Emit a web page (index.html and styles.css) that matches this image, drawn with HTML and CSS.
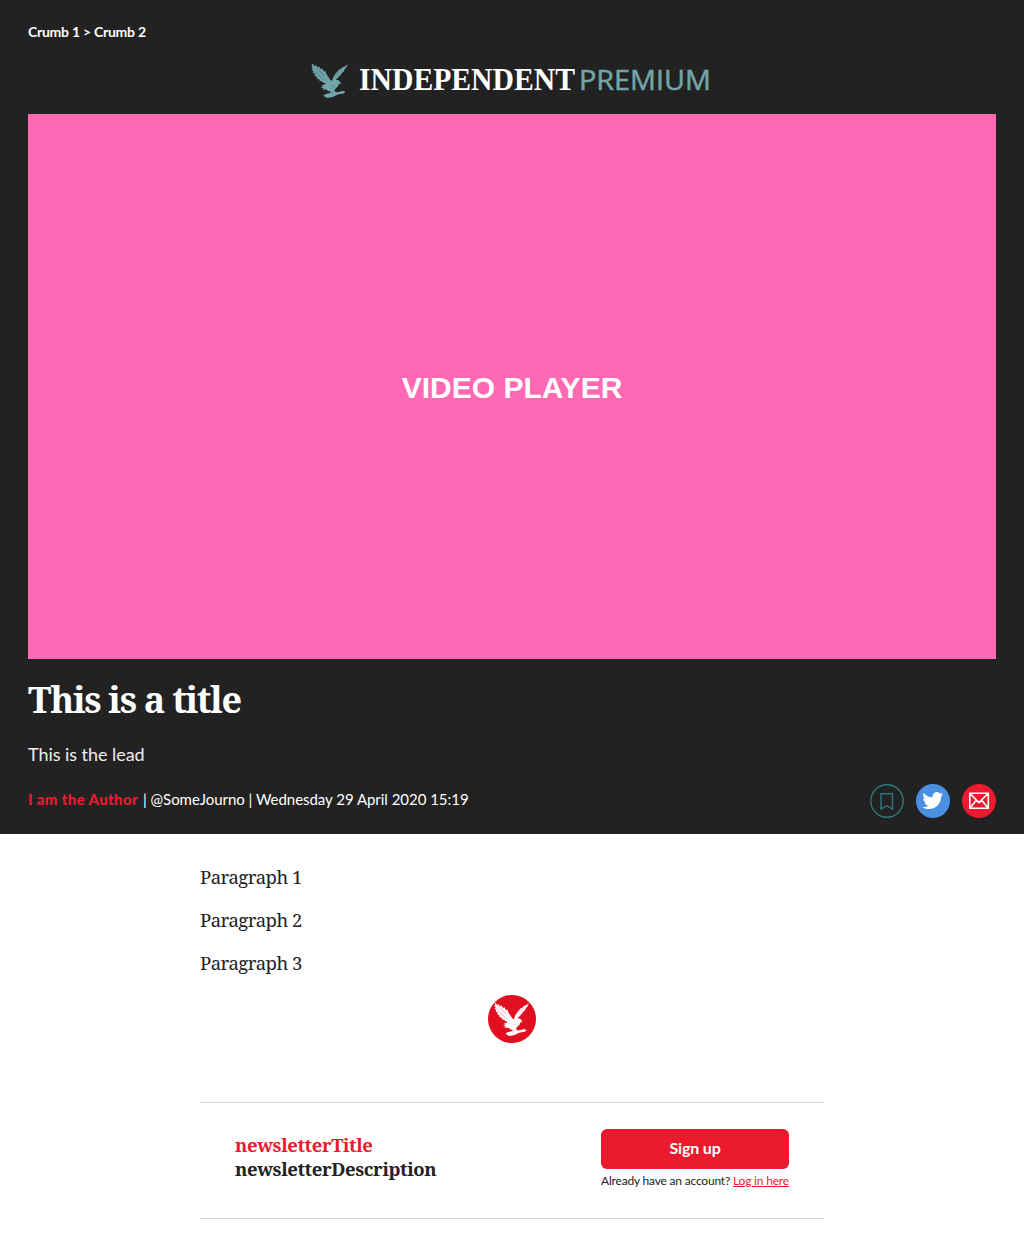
FILE: index.html
```html
<!DOCTYPE html>
<html lang="en">
<head>
<meta charset="utf-8">
<title>This is a title</title>
<link rel="stylesheet" href="styles.css">
</head>
<body>
<svg class="defs" width="0" height="0" aria-hidden="true">
  <symbol id="eagle" viewBox="12 13 105 100" preserveAspectRatio="none">
    <path d="M20 12l5 9 2-6 6 9 2-5 7 10 3-4 6 11 3-3 4 11 5 7 5 8 4 4 5-12 5-9 6-7 4-5 5-2 4-5 7-3 9-6-5 10-4 4-2 6-5 5-4 6-7 8-7 6 8 2 5 5 1 6-5-1-2 7-7 7-4 6 5 5 9-1 9-3 8 3-5 5-17 3-11 6-15 4-9-3-4-5 7-4 9-2 6-5-7-1-8-5-10 1 4-5-9-1 7-4-5-3 9-3 3-4-9-1 1-3-9-3 1-3-9-4 2-3-8-6 3-2-8-7 3-1-6-8 4 0-5-9 4 1-3-9 4 2z"/>
    <path class="feather" d="M19 25l19 19M27 23l21 22M36 28l18 22M24 37l22 17M34 47l20 14M82 47l21-20M86 53l17-16M72 76l6 8M68 99l11-3"/>
  </symbol>
</svg>
<header class="hero">
  <nav class="crumbs">Crumb 1 &gt; Crumb 2</nav>
  <div class="brand">
    <svg class="brand-eagle" width="38" height="34"><use href="#eagle"/></svg>
    <svg class="brand-name" width="358" height="44" viewBox="0 0 358 44">
      <text class="masthead" x="3" y="26" textLength="216" lengthAdjust="spacingAndGlyphs">INDEPENDENT</text>
      <text class="premium" x="223" y="26" textLength="132" lengthAdjust="spacingAndGlyphs">PREMIUM</text>
    </svg>
  </div>
  <div class="player">VIDEO PLAYER</div>
  <h1 class="title">This is a title</h1>
  <p class="lead">This is the lead</p>
  <div class="meta">
    <div class="byline"><b class="author">I am the Author</b><span class="details">| @SomeJourno | Wednesday 29 April 2020 15:19</span></div>
    <div class="share">
      <svg width="34" height="34" viewBox="0 0 34 34"><circle class="save-ring" cx="17" cy="17" r="16.2"/><path class="save-mark" d="M11 9.700h11.500v15.300l-5.800-3.300L11 25z"/></svg>
      <svg width="34" height="34" viewBox="0 0 34 34"><circle class="twitter" cx="17" cy="17" r="17"/><path class="bird" transform="translate(6.300 6.200) scale(.87)" d="M23.950 4.570a10 10 0 0 1-2.820.770 4.960 4.960 0 0 0 2.160-2.720c-.950.560-2 .960-3.130 1.180a4.920 4.920 0 0 0-8.380 4.480C7.690 8.090 4.070 6.130 1.640 3.160a4.820 4.820 0 0 0-.670 2.480c0 1.710.870 3.210 2.190 4.100a4.900 4.900 0 0 1-2.230-.620v.060a4.920 4.920 0 0 0 3.950 4.830 5 5 0 0 1-2.210.080 4.940 4.940 0 0 0 4.600 3.420A9.870 9.870 0 0 1 0 19.540a14 14 0 0 0 7.550 2.210c9.050 0 14-7.500 14-13.980 0-.210 0-.420-.020-.630a9.940 9.940 0 0 0 2.420-2.570z"/></svg>
      <svg width="34" height="34" viewBox="0 0 34 34"><circle class="mail" cx="17" cy="17" r="17"/><path class="envelope" d="M7.800 9.200h18.500v15H7.800zM8 9.500l9 9 9-9M8 24l6.500-8M26 24l-6.500-8"/></svg>
    </div>
  </div>
</header>
<main class="article">
  <p class="para">Paragraph 1</p>
  <p class="para">Paragraph 2</p>
  <p class="para">Paragraph 3</p>
  <div class="end-mark"><svg width="36" height="33"><use href="#eagle"/></svg></div>
  <section class="newsletter">
    <div class="pitch"><div class="pitch-title">newsletterTitle</div><div class="pitch-text">newsletterDescription</div></div>
    <div class="join">
      <button class="signup">Sign up</button>
      <div class="account">Already have an account? <a class="login" href="#">Log in here</a></div>
    </div>
  </section>
</main>
</body>
</html>
```

FILE: styles.css
```css
* { box-sizing: border-box; }
body { margin: 0; background: #fff; color: #222; font-family: Lato, "Open Sans", sans-serif; }
svg { display: block; flex: none; overflow: visible; }
.defs { position: absolute; }
.hero { height: 834px; padding: 22px 28px 0; background: #222; color: #fff; }
.crumbs { height: 42px; font-size: 14px; line-height: 20px; font-weight: 700; letter-spacing: -.25px; white-space: nowrap; }
.brand { display: flex; justify-content: center; gap: 8px; height: 50px; }
.brand-eagle { fill: #71a5a9; --feather: #44686b; }
.feather { fill: none; stroke: var(--feather); stroke-width: 1.200; }
.masthead { font: 700 31px "Liberation Serif", serif; fill: #fff; }
.premium { font: 400 28px "Open Sans", sans-serif; fill: #71a5a9; stroke: #71a5a9; stroke-width: .5; }
.player { display: flex; align-items: center; justify-content: center; height: 545px; padding-top: 3px; background: #ff69b4; font: 700 30px "Liberation Sans", sans-serif; }
.title { height: 81px; margin: 0; padding-top: 17px; font: 700 36px/48px "Noto Serif", "Liberation Serif", serif; letter-spacing: -1.3px; white-space: nowrap; }
.lead { height: 44px; margin: 0; padding-top: 2px; font-size: 18px; line-height: 24px; letter-spacing: -.05px; color: #eee; }
.meta { display: flex; justify-content: space-between; }
.byline { display: flex; gap: 5px; font-size: 15px; line-height: 31px; white-space: nowrap; }
.author { color: #ec1a2e; font-weight: 900; letter-spacing: .36px; }
.details { letter-spacing: -.03px; }
.share { display: flex; gap: 12px; }
.save-ring, .save-mark { fill: none; stroke: #2f787b; stroke-width: 1.400; }
.twitter { fill: #4a90e2; }
.bird { fill: #fff; }
.mail { fill: #ec1a2e; }
.envelope { fill: none; stroke: #fff; stroke-width: 1.600; }
.article { width: 624px; margin: 0 auto; padding-top: 28px; }
.para { margin: 0 0 13px; font: 400 18.500px/30px "Noto Serif", "Liberation Serif", serif; letter-spacing: -.5px; }
.end-mark { display: flex; align-items: center; justify-content: center; width: 48px; height: 48px; margin: 17px auto 59px; padding-right: 3px; border-radius: 50%; background: #e20f21; fill: #fff; --feather: #ee7a83; }
.newsletter { display: flex; justify-content: space-between; height: 117px; padding: 26px 35px 0; border: solid #d3d3d3; border-width: 1px 0; }
.pitch { padding-top: 4px; font: 700 18.500px/24px "Noto Serif", "Liberation Serif", serif; letter-spacing: -.38px; }
.pitch-title { color: #ec1a2e; }
.join { width: 188px; }
.signup { display: block; width: 188px; height: 40px; padding: 0 0 3px; border: 0; border-radius: 6px; background: #ec1a2e; color: #fff; font: 700 16px Lato, sans-serif; letter-spacing: -.15px; }
.account { font-size: 12px; line-height: 24px; letter-spacing: -.19px; white-space: nowrap; }
.login { color: #ec1a2e; }
```
